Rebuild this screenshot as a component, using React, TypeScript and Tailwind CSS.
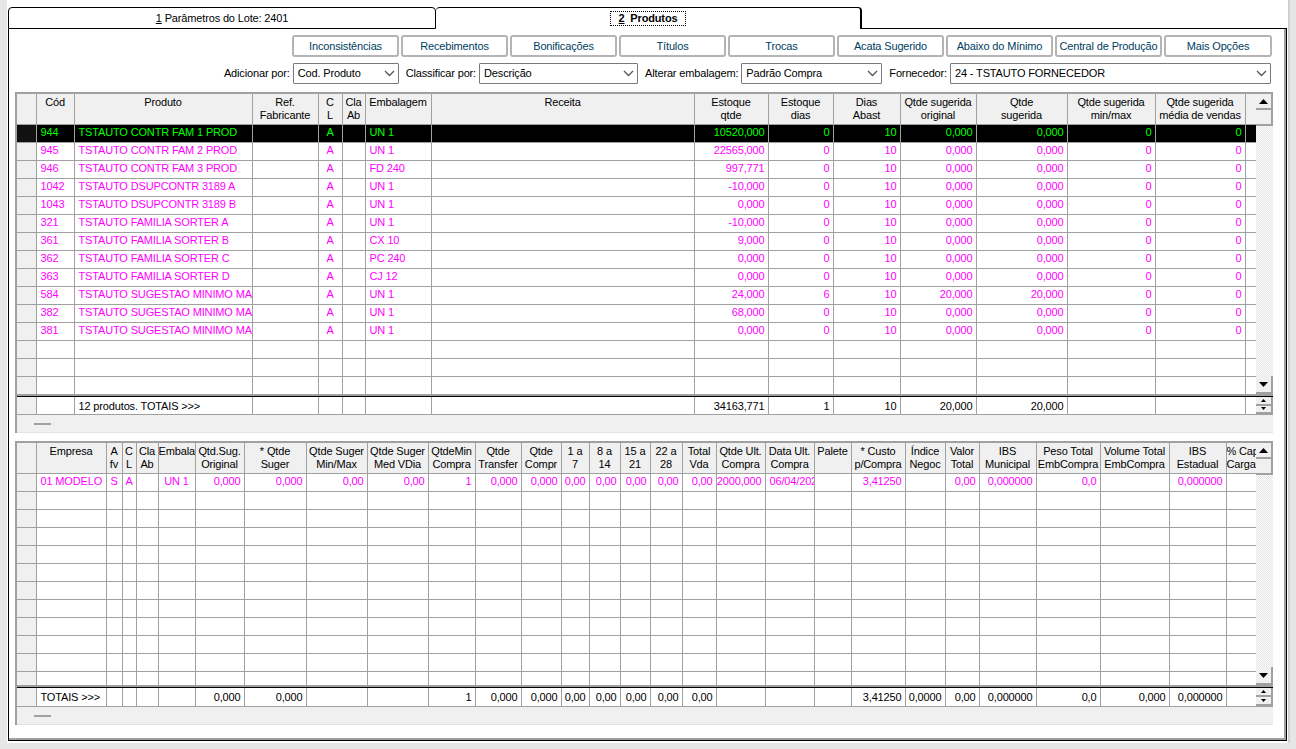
import { ReactNode } from "react";

type Col = { w: string; head: string[]; right?: boolean; center?: boolean };

const upperCols: Col[] = [
  { w: "w-[19px]", head: [""] },
  { w: "w-[38px]", head: ["Cód"] },
  { w: "w-[178px]", head: ["Produto"] },
  { w: "w-[66px]", head: ["Ref.", "Fabricante"] },
  { w: "w-[24px]", head: ["C", "L"], center: true },
  { w: "w-[23px]", head: ["Cla", "Ab"] },
  { w: "w-[66px]", head: ["Embalagem"] },
  { w: "w-[263px]", head: ["Receita"] },
  { w: "w-[74px]", head: ["Estoque", "qtde"], right: true },
  { w: "w-[65px]", head: ["Estoque", "dias"], right: true },
  { w: "w-[67px]", head: ["Dias", "Abast"], right: true },
  { w: "w-[76px]", head: ["Qtde sugerida", "original"], right: true },
  { w: "w-[91px]", head: ["Qtde", "sugerida"], right: true },
  { w: "w-[88px]", head: ["Qtde sugerida", "min/max"], right: true },
  { w: "w-[90px]", head: ["Qtde sugerida", "média de vendas"], right: true },
  { w: "w-[11px]", head: [""] },
];

const lowerCols: Col[] = [
  { w: "w-[19px]", head: [""] },
  { w: "w-[70px]", head: ["Empresa"] },
  { w: "w-[16px]", head: ["A", "fv"], center: true },
  { w: "w-[14px]", head: ["C", "L"], center: true },
  { w: "w-[22px]", head: ["Cla", "Ab"] },
  { w: "w-[37px]", head: ["Embalagem"], center: true },
  { w: "w-[49px]", head: ["Qtd.Sug.", "Original"], right: true },
  { w: "w-[62px]", head: ["* Qtde", "Suger"], right: true },
  { w: "w-[61px]", head: ["Qtde Suger", "Min/Max"], right: true },
  { w: "w-[61px]", head: ["Qtde Suger", "Med VDia"], right: true },
  { w: "w-[47px]", head: ["QtdeMin", "Compra"], right: true },
  { w: "w-[46px]", head: ["Qtde", "Transfer"], right: true },
  { w: "w-[40px]", head: ["Qtde", "Compr"], right: true },
  { w: "w-[28px]", head: ["1 a", "7"], right: true },
  { w: "w-[31px]", head: ["8 a", "14"], right: true },
  { w: "w-[30px]", head: ["15 a", "21"], right: true },
  { w: "w-[32px]", head: ["22 a", "28"], right: true },
  { w: "w-[34px]", head: ["Total", "Vda"], right: true },
  { w: "w-[49px]", head: ["Qtde Ult.", "Compra"], right: true },
  { w: "w-[49px]", head: ["Data Ult.", "Compra"] },
  { w: "w-[37px]", head: ["Palete"] },
  { w: "w-[54px]", head: ["* Custo", "p/Compra"], right: true },
  { w: "w-[40px]", head: ["Índice", "Negoc"], right: true },
  { w: "w-[34px]", head: ["Valor", "Total"], right: true },
  { w: "w-[57px]", head: ["IBS", "Municipal"], right: true },
  { w: "w-[64px]", head: ["Peso Total", "EmbCompra"], right: true },
  { w: "w-[69px]", head: ["Volume Total", "EmbCompra"], right: true },
  { w: "w-[57px]", head: ["IBS", "Estadual"], right: true },
  { w: "w-[30px]", head: ["% Capac", "Carga"] },
];

const upperRows: string[][] = [
  ["944", "TSTAUTO CONTR FAM 1 PROD", "", "A", "", "UN 1", "", "10520,000", "0", "10", "0,000", "0,000", "0", "0"],
  ["945", "TSTAUTO CONTR FAM 2 PROD", "", "A", "", "UN 1", "", "22565,000", "0", "10", "0,000", "0,000", "0", "0"],
  ["946", "TSTAUTO CONTR FAM 3 PROD", "", "A", "", "FD 240", "", "997,771", "0", "10", "0,000", "0,000", "0", "0"],
  ["1042", "TSTAUTO DSUPCONTR 3189 A", "", "A", "", "UN 1", "", "-10,000", "0", "10", "0,000", "0,000", "0", "0"],
  ["1043", "TSTAUTO DSUPCONTR 3189 B", "", "A", "", "UN 1", "", "0,000", "0", "10", "0,000", "0,000", "0", "0"],
  ["321", "TSTAUTO FAMILIA SORTER A", "", "A", "", "UN 1", "", "-10,000", "0", "10", "0,000", "0,000", "0", "0"],
  ["361", "TSTAUTO FAMILIA SORTER B", "", "A", "", "CX 10", "", "9,000", "0", "10", "0,000", "0,000", "0", "0"],
  ["362", "TSTAUTO FAMILIA SORTER C", "", "A", "", "PC 240", "", "0,000", "0", "10", "0,000", "0,000", "0", "0"],
  ["363", "TSTAUTO FAMILIA SORTER D", "", "A", "", "CJ 12", "", "0,000", "0", "10", "0,000", "0,000", "0", "0"],
  ["584", "TSTAUTO SUGESTAO MINIMO MAXIMO", "", "A", "", "UN 1", "", "24,000", "6", "10", "20,000", "20,000", "0", "0"],
  ["382", "TSTAUTO SUGESTAO MINIMO MAXIMO", "", "A", "", "UN 1", "", "68,000", "0", "10", "0,000", "0,000", "0", "0"],
  ["381", "TSTAUTO SUGESTAO MINIMO MAXIMO", "", "A", "", "UN 1", "", "0,000", "0", "10", "0,000", "0,000", "0", "0"],
];

const upperTotals = ["", "12 produtos. TOTAIS >>>", "", "", "", "", "", "34163,771", "1", "10", "20,000", "20,000", "", ""];

const lowerRow = [
  "01 MODELO", "S", "A", "", "UN 1", "0,000", "0,000", "0,00", "0,00", "1", "0,000", "0,000", "0,00", "0,00", "0,00", "0,00",
  "0,00", "12000,000", "06/04/2025", "", "3,41250", "", "0,00", "0,000000", "0,0", "", "0,000000", "",
];

const lowerTotals = [
  "TOTAIS >>>", "", "", "", "", "0,000", "0,000", "", "", "1", "0,000", "0,000", "0,00", "0,00", "0,00", "0,00",
  "0,00", "", "", "", "3,41250", "0,0000", "0,00", "0,000000", "0,0", "0,000", "0,000000", "",
];

function Button({ label, w = "w-[107px]" }: { label: string; w?: string }) {
  return (
    <button className={`h-[22px] ${w} shrink-0 rounded-[3px] border-2 border-[#b4b4b4] bg-white text-[#00405f] whitespace-nowrap`}>
      {label}
    </button>
  );
}

function Select({ label, value, w, ml }: { label: string; value: string; w: string; ml: string }) {
  return (
    <div className={`flex items-center gap-[3px] ${ml}`}>
      <span className="whitespace-nowrap">{label}</span>
      <div className={`${w} h-[21px] flex items-center justify-between pl-[4px] pr-[3px] border border-[#7a7a7a] rounded-[1px] bg-white`}>
        <span className="whitespace-nowrap">{value}</span>
        <svg width="11" height="7" viewBox="0 0 11 7" fill="none" stroke="#555" strokeWidth="1.3">
          <path d="M1 1l4.5 4.5L10 1" />
        </svg>
      </div>
    </div>
  );
}

function Arrow({ up, size = 9 }: { up?: boolean; size?: number }) {
  return (
    <svg width={size} height={(size + 1) / 2} viewBox="0 0 9 5" fill="black">
      <path d={up ? "M4.5 0L9 5H0z" : "M0 0h9L4.5 5z"} />
    </svg>
  );
}

function ScrollBtn({ children, h }: { children?: ReactNode; h: string }) {
  return (
    <div className={`${h} w-[17px] flex items-center justify-center bg-[#f0f0f0] border-r-2 border-b-2 border-[#a0a0a0]`}>
      {children}
    </div>
  );
}

function HeaderCell({ lines }: { lines: string[] }) {
  return (
    <th className="p-0 font-normal align-top bg-[#f0f0f0] border-r border-b border-[#a0a0a0] overflow-hidden">
      <div className="pt-[2px] leading-[13px] whitespace-nowrap overflow-hidden text-center">
        {lines.map((l, i) => (
          <div key={i} className="overflow-hidden">{l}</div>
        ))}
      </div>
    </th>
  );
}

function CellText({ value, col, shift }: { value: string; col: Col; shift: string }) {
  if (col.right) {
    return <div className={`flex justify-end overflow-hidden pr-[3px] leading-[16px] ${shift}`}><span className="shrink-0">{value}</span></div>;
  }
  return <div className={`overflow-hidden leading-[16px] ${shift} ${col.center ? "text-center" : "pl-[4px]"}`}>{value}</div>;
}

function Grid({
  cols,
  rows,
  blank,
  totals,
  bodyH,
  totalsH,
}: {
  cols: Col[];
  rows: string[][];
  blank: number;
  totals: string[];
  bodyH: string;
  totalsH: string;
}) {
  const colgroup = (
    <colgroup>
      {cols.map((c, i) => (
        <col key={i} className={c.w} />
      ))}
    </colgroup>
  );
  const dataCols = cols.slice(1);
  const highlight = cols.length < 20;

  return (
    <div className="w-[1258px] border-l-2 border-t-2 border-[#a0a0a0] bg-[#f0f0f0]">
      <div className={`flex ${bodyH}`}>
        <div className="w-[1239px] overflow-hidden bg-white">
          <table className="w-[1239px] table-fixed border-collapse">
            {colgroup}
            <thead>
              <tr className="h-[30px]">
                {cols.map((c, i) => (
                  <HeaderCell key={i} lines={c.head} />
                ))}
              </tr>
            </thead>
            <tbody>
              {rows.map((r, ri) => {
                const selected = highlight && ri === 0;
                return (
                  <tr key={ri} className="h-[18px]">
                    <td className={`p-0 border-r border-b border-[#a0a0a0] ${selected ? "bg-[#111]" : "bg-[#f0f0f0]"}`} />
                    {dataCols.map((c, ci) => (
                      <td
                        key={ci}
                        className={`p-0 align-top border-r border-b border-[#a0a0a0] whitespace-nowrap ${selected ? "text-[#00ff00] bg-black" : "text-[#ff00ff]"}`}
                      >
                        <CellText value={r[ci] ?? ""} col={c} shift="-translate-y-px" />
                      </td>
                    ))}
                  </tr>
                );
              })}
              {Array.from({ length: blank }).map((_, ri) => (
                <tr key={ri} className="h-[18px]">
                  <td className="p-0 bg-[#f0f0f0] border-r border-b border-[#a0a0a0]" />
                  {dataCols.map((c, ci) => (
                    <td key={ci} className="p-0 border-r border-b border-[#a0a0a0]" />
                  ))}
                </tr>
              ))}
            </tbody>
          </table>
        </div>
        <div className="w-[17px] flex flex-col bg-[repeating-conic-gradient(#e3e3e3_0_25%,#ffffff_0_50%)] bg-[length:2px_2px]">
          <ScrollBtn h="h-[16px]">
            <Arrow up />
          </ScrollBtn>
          <ScrollBtn h="h-[16px]" />
          <div className="flex-1" />
          <ScrollBtn h="h-[18px]">
            <Arrow />
          </ScrollBtn>
        </div>
      </div>
      <div className="border-t-2 border-[#a0a0a0]">
        <div className="flex border-t border-b border-t-black border-b-[#a0a0a0]">
          <div className="w-[1239px] overflow-hidden bg-white">
            <table className="w-[1239px] table-fixed border-collapse">
              {colgroup}
              <tbody>
                <tr className={totalsH}>
                  <td className="p-0 bg-[#f0f0f0] border-r border-[#a0a0a0]" />
                  {dataCols.map((c, ci) => (
                    <td key={ci} className="p-0 align-top border-r border-[#a0a0a0] whitespace-nowrap">
                      <CellText value={totals[ci] ?? ""} col={c} shift="pt-px" />
                    </td>
                  ))}
                </tr>
              </tbody>
            </table>
          </div>
          <div className="w-[17px] flex flex-col">
            <ScrollBtn h="flex-1">
              <Arrow up size={5} />
            </ScrollBtn>
            <ScrollBtn h="flex-1">
              <Arrow size={5} />
            </ScrollBtn>
          </div>
        </div>
      </div>
      <div className="h-[18px] flex items-center pl-[17px] border-b border-[#e4e4e4]">
        <div className="h-[2px] w-[17px] bg-[#a0a0a0]" />
      </div>
    </div>
  );
}

export default function App() {
  return (
    <div className="h-[749px] w-[1296px] overflow-hidden bg-[#e6e6e6] font-['Liberation_Sans',sans-serif] text-[11px] tracking-[-0.15px] text-black flex flex-col">
      <div className="flex h-[743px]">
        <div className="w-[7px]" />
        <div className="w-[1281px] bg-white flex flex-col pt-[7px] pl-px pr-px">
          <div className="h-[22px] flex items-stretch">
            <div className="w-[428px] rounded-tl-[4px] rounded-tr-[4px] border border-black flex items-center justify-center">
              <span><u>1</u> Parâmetros do Lote: 2401</span>
            </div>
            <div className="w-[426px] rounded-tl-[4px] rounded-tr-[4px] border-t border-r-2 border-black flex items-center justify-center">
              <span className="font-bold border border-dotted border-black px-[8px] leading-[13px]"><u>2</u>&nbsp; Produtos</span>
            </div>
            <div className="flex-1 border-b border-black" />
          </div>
          <div className="h-[712px] border-l border-r border-b border-black">
            <div className="h-full border-r-2 border-b-2 border-[#a0a0a0] flex flex-col pl-[6px]">
              <div className="flex justify-end gap-[2px] pt-[6px] pr-[12px]">
                <Button label="Inconsistências" />
                <Button label="Recebimentos" />
                <Button label="Bonificações" />
                <Button label="Títulos" />
                <Button label="Trocas" />
                <Button label="Acata Sugerido" />
                <Button label="Abaixo do Mínimo" />
                <Button label="Central de Produção" />
                <Button label="Mais Opções" w="w-[108px]" />
              </div>
              <div className="flex justify-end pt-[6px] pr-[13px]">
                <Select label="Adicionar por:" value="Cod. Produto" w="w-[106px]" ml="ml-0" />
                <Select label="Classificar por:" value="Descrição" w="w-[159px]" ml="ml-[7px]" />
                <Select label="Alterar embalagem:" value="Padrão Compra" w="w-[141px]" ml="ml-[7px]" />
                <Select label="Fornecedor:" value="24 - TSTAUTO FORNECEDOR" w="w-[321px]" ml="ml-[7px]" />
              </div>
              <div className="pt-[8px]">
                <Grid cols={upperCols} rows={upperRows} blank={3} totals={upperTotals} bodyH="h-[300px]" totalsH="h-[17px]" />
              </div>
              <div className="pt-[8px]">
                <Grid cols={lowerCols} rows={[lowerRow]} blank={11} totals={lowerTotals} bodyH="h-[242px]" totalsH="h-[18px]" />
              </div>
            </div>
          </div>
        </div>
        <div className="w-[8px] border-l-2 border-[#d0d0d0]" />
      </div>
    </div>
  );
}
